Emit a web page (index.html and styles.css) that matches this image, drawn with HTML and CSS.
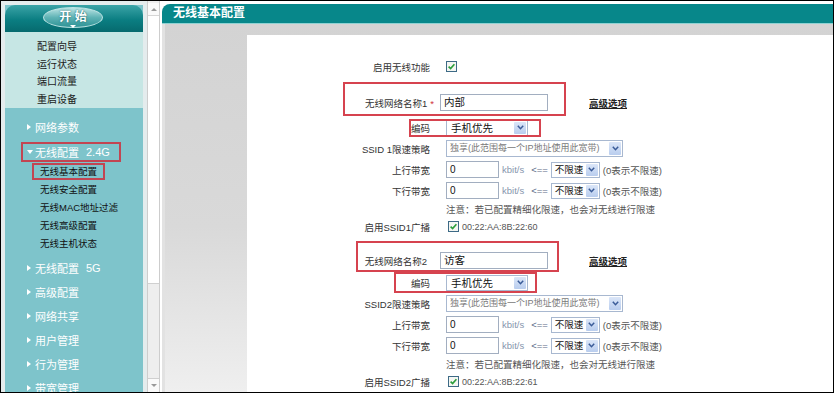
FILE: index.html
```html
<!DOCTYPE html>
<html lang="zh-CN">
<head>
    <meta charset="UTF-8">
    <title>无线基本配置</title>
    <link rel="stylesheet" href="styles.css">
</head>
<body>
<div class="frame">
    <div class="side-wrap">
        <div class="side">
            <div class="side-head">
                <div class="start-btn">开 始<span class="start-arrow"></span></div>
            </div>
            <div class="quick">
                <a>配置向导</a>
                <a>运行状态</a>
                <a>端口流量</a>
                <a>重启设备</a>
            </div>
            <div class="menu">
                <div class="menu-item">网络参数</div>
                <div class="menu-item open">无线配置<span class="band">2.4G</span></div>
                <div class="sub">
                    <div class="sub-item"><span class="cur">无线基本配置</span></div>
                    <div class="sub-item"><span>无线安全配置</span></div>
                    <div class="sub-item"><span>无线MAC地址过滤</span></div>
                    <div class="sub-item"><span>无线高级配置</span></div>
                    <div class="sub-item"><span>无线主机状态</span></div>
                </div>
                <div class="menu-item">无线配置<span class="band">5G</span></div>
                <div class="menu-item">高级配置</div>
                <div class="menu-item">网络共享</div>
                <div class="menu-item">用户管理</div>
                <div class="menu-item">行为管理</div>
                <div class="menu-item">带宽管理</div>
            </div>
        </div>
    </div>

    <div class="vscroll">
        <div class="sb-up"><span class="tri-up"></span></div>
        <div class="sb-thumb"></div>
        <div class="sb-track"></div>
        <div class="sb-down"><span class="tri-down"></span></div>
    </div>

    <div class="main">
        <div class="main-head">无线基本配置</div>
        <div class="main-body">
            <div class="panel">
                <div class="row">
                    <div class="lbl">启用无线功能</div>
                    <div class="val">
                        <svg class="chk" width="11" height="11" viewBox="0 0 11 11"><rect x="0.5" y="0.5" width="10" height="10" fill="#f4f6f2" stroke="#3d6a86"/><path d="M2.6 5.6 L4.6 7.6 L8.4 3.2" fill="none" stroke="#2a9d3a" stroke-width="1.6"/></svg>
                    </div>
                </div>

                <!-- SSID 1 -->
                <div class="row name first">
                    <div class="lbl">无线网络名称1<span class="req">*</span></div>
                    <div class="val">
                        <span class="inp w-name">内部</span>
                        <a class="adv">高级选项</a>
                    </div>
                </div>
                <div class="row enc first">
                    <div class="lbl">编码</div>
                    <div class="val">
                        <span class="sel w-enc"><span class="sel-text">手机优先</span><span class="sel-btn"><svg width="7" height="5" viewBox="0 0 7 5"><path d="M0.8 0.8 L3.5 3.7 L6.2 0.8" fill="none" stroke="#3a5b98" stroke-width="1.5"/></svg></span></span>
                    </div>
                </div>
                <div class="row">
                    <div class="lbl">SSID 1限速策略</div>
                    <div class="val">
                        <span class="sel w-long"><span class="sel-text dim">独享(此范围每一个IP地址使用此宽带)</span><span class="sel-btn"><svg width="7" height="5" viewBox="0 0 7 5"><path d="M0.8 0.8 L3.5 3.7 L6.2 0.8" fill="none" stroke="#3a5b98" stroke-width="1.5"/></svg></span></span>
                    </div>
                </div>
                <div class="row">
                    <div class="lbl">上行带宽</div>
                    <div class="val">
                        <span class="inp w-bw">0</span>
                        <span class="unit">kbit/s</span>
                        <span class="arrow">&lt;==</span>
                        <span class="sel w-lim"><span class="sel-text">不限速</span><span class="sel-btn"><svg width="7" height="5" viewBox="0 0 7 5"><path d="M0.8 0.8 L3.5 3.7 L6.2 0.8" fill="none" stroke="#3a5b98" stroke-width="1.5"/></svg></span></span>
                        <span class="hint">(0表示不限速)</span>
                    </div>
                </div>
                <div class="row">
                    <div class="lbl">下行带宽</div>
                    <div class="val">
                        <span class="inp w-bw">0</span>
                        <span class="unit">kbit/s</span>
                        <span class="arrow">&lt;==</span>
                        <span class="sel w-lim"><span class="sel-text">不限速</span><span class="sel-btn"><svg width="7" height="5" viewBox="0 0 7 5"><path d="M0.8 0.8 L3.5 3.7 L6.2 0.8" fill="none" stroke="#3a5b98" stroke-width="1.5"/></svg></span></span>
                        <span class="hint">(0表示不限速)</span>
                    </div>
                </div>
                <div class="row note">
                    <div class="lbl"></div>
                    <div class="val">注意：若已配置精细化限速，也会对无线进行限速</div>
                </div>
                <div class="row">
                    <div class="lbl">启用SSID1广播</div>
                    <div class="val">
                        <svg class="chk mac-chk" width="11" height="11" viewBox="0 0 11 11"><rect x="0.5" y="0.5" width="10" height="10" fill="#f4f6f2" stroke="#3d6a86"/><path d="M2.6 5.6 L4.6 7.6 L8.4 3.2" fill="none" stroke="#2a9d3a" stroke-width="1.6"/></svg>
                        <span class="mac">00:22:AA:8B:22:60</span>
                    </div>
                </div>

                <!-- SSID 2 -->
                <div class="row name second">
                    <div class="lbl">无线网络名称2</div>
                    <div class="val">
                        <span class="inp w-name">访客</span>
                        <a class="adv">高级选项</a>
                    </div>
                </div>
                <div class="row enc second">
                    <div class="lbl">编码</div>
                    <div class="val">
                        <span class="sel w-enc"><span class="sel-text">手机优先</span><span class="sel-btn"><svg width="7" height="5" viewBox="0 0 7 5"><path d="M0.8 0.8 L3.5 3.7 L6.2 0.8" fill="none" stroke="#3a5b98" stroke-width="1.5"/></svg></span></span>
                    </div>
                </div>
                <div class="row">
                    <div class="lbl">SSID2限速策略</div>
                    <div class="val">
                        <span class="sel w-long"><span class="sel-text dim">独享(此范围每一个IP地址使用此宽带)</span><span class="sel-btn"><svg width="7" height="5" viewBox="0 0 7 5"><path d="M0.8 0.8 L3.5 3.7 L6.2 0.8" fill="none" stroke="#3a5b98" stroke-width="1.5"/></svg></span></span>
                    </div>
                </div>
                <div class="row">
                    <div class="lbl">上行带宽</div>
                    <div class="val">
                        <span class="inp w-bw">0</span>
                        <span class="unit">kbit/s</span>
                        <span class="arrow">&lt;==</span>
                        <span class="sel w-lim"><span class="sel-text">不限速</span><span class="sel-btn"><svg width="7" height="5" viewBox="0 0 7 5"><path d="M0.8 0.8 L3.5 3.7 L6.2 0.8" fill="none" stroke="#3a5b98" stroke-width="1.5"/></svg></span></span>
                        <span class="hint">(0表示不限速)</span>
                    </div>
                </div>
                <div class="row">
                    <div class="lbl">下行带宽</div>
                    <div class="val">
                        <span class="inp w-bw">0</span>
                        <span class="unit">kbit/s</span>
                        <span class="arrow">&lt;==</span>
                        <span class="sel w-lim"><span class="sel-text">不限速</span><span class="sel-btn"><svg width="7" height="5" viewBox="0 0 7 5"><path d="M0.8 0.8 L3.5 3.7 L6.2 0.8" fill="none" stroke="#3a5b98" stroke-width="1.5"/></svg></span></span>
                        <span class="hint">(0表示不限速)</span>
                    </div>
                </div>
                <div class="row note">
                    <div class="lbl"></div>
                    <div class="val">注意：若已配置精细化限速，也会对无线进行限速</div>
                </div>
                <div class="row">
                    <div class="lbl">启用SSID2广播</div>
                    <div class="val">
                        <svg class="chk mac-chk" width="11" height="11" viewBox="0 0 11 11"><rect x="0.5" y="0.5" width="10" height="10" fill="#f4f6f2" stroke="#3d6a86"/><path d="M2.6 5.6 L4.6 7.6 L8.4 3.2" fill="none" stroke="#2a9d3a" stroke-width="1.6"/></svg>
                        <span class="mac">00:22:AA:8B:22:61</span>
                    </div>
                </div>

                <!-- red highlight marks drawn over the form -->
                <div class="mark mark-name1"></div>
                <div class="mark mark-enc1"></div>
                <div class="mark mark-name2"></div>
                <div class="mark mark-enc2"></div>
            </div>
        </div>
    </div>
</div>
</body>
</html>
```

FILE: styles.css
```css
body {
    margin: 0;
    background: #fff;
    font-family: "Liberation Sans", "Noto Sans CJK SC", sans-serif;
    color: #333;
}
.frame {
    width: 834px;
    height: 393px;
    box-sizing: border-box;
    border: 1px solid #000;
    display: flex;
    overflow: hidden;
}

/* left menu */
.side-wrap {
    width: 146px;
    flex: none;
    padding: 4px 4px 0 4px;
    box-sizing: border-box;
    background: #e4eced;
}
.side {
    width: 138px;
    height: 100%;
    background: #7ec4cb;
}
.side-head {
    height: 27px;
    border-radius: 10px 10px 0 0;
    background: linear-gradient(#3ba4a7, #0b7e82 55%, #066a6e);
    display: flex;
    justify-content: center;
    align-items: center;
}
.start-btn {
    position: relative;
    width: 58px;
    height: 19px;
    margin: 0 2px 2px 0;
    border-radius: 50%;
    border: 1px solid #bde4e4;
    background: linear-gradient(#b9e3e3, #5fb3b5 50%, #2e9396);
    color: #fff;
    font-weight: bold;
    font-size: 12px;
    line-height: 19px;
    text-align: center;
    text-shadow: 0 0 2px #0a5a5d;
}
.start-arrow {
    position: absolute;
    left: 50%;
    bottom: -1px;
    margin-left: -3px;
    border-left: 3px solid transparent;
    border-right: 3px solid transparent;
    border-top: 3px solid #fff;
}
.quick {
    height: 76px;
    padding-top: 6px;
    box-sizing: border-box;
    background: #c6e6e4;
}
.quick a {
    display: block;
    padding-left: 32px;
    line-height: 17.7px;
    font-size: 10px;
    color: #1b1b1b;
}
.menu {
    padding-top: 7px;
}
.menu-item {
    display: flex;
    align-items: center;
    height: 24px;
    padding-left: 22px;
    color: #fff;
    font-size: 11px;
}
.menu-item::before {
    content: "";
    border-left: 4px solid #fff;
    border-top: 3px solid transparent;
    border-bottom: 3px solid transparent;
    margin-right: 4px;
}
.menu-item.open {
    box-sizing: border-box;
    width: 100px;
    height: 20px;
    margin: 3px 0 1px 16px;
    padding-left: 4px;
    border: 2px solid #c24552;
}
.menu-item.open::before {
    border-top: 4px solid #fff;
    border-left: 3px solid transparent;
    border-right: 3px solid transparent;
    border-bottom: 0;
    margin-right: 2px;
}
.band {
    margin-left: 7px;
}
.sub {
    padding-bottom: 4px;
}
.sub-item {
    height: 17.8px;
    display: flex;
    align-items: center;
    padding-left: 27px;
}
.sub-item span {
    padding: 0 6px;
    border: 2px solid transparent;
    line-height: 13px;
    font-size: 9.5px;
    color: #111;
}
.sub-item .cur {
    border-color: #c24552;
}

/* menu scrollbar */
.vscroll {
    width: 13px;
    flex: none;
    margin-right: 2px;
    box-sizing: border-box;
    border-left: 1px solid #cdcdcd;
    border-right: 1px solid #cdcdcd;
    display: flex;
    flex-direction: column;
    background: #eeeeee;
}
.sb-up, .sb-down {
    height: 12px;
    background: #fafafa;
    display: flex;
    justify-content: center;
    align-items: center;
}
.sb-up {
    border-bottom: 1px solid #d6d6d6;
    margin-top: 2px;
}
.sb-down {
    height: 13px;
    border-top: 1px solid #cfcfcf;
}
.tri-up {
    border-left: 3px solid transparent;
    border-right: 3px solid transparent;
    border-bottom: 3px solid #9a9a9a;
}
.tri-down {
    border-left: 3px solid transparent;
    border-right: 3px solid transparent;
    border-top: 3px solid #9a9a9a;
}
.sb-thumb {
    height: 267px;
    background: #fff;
    border-bottom: 1px solid #d0d0d0;
}
.sb-track {
    flex: 1;
}

/* content */
.main {
    flex: 1;
    display: flex;
    flex-direction: column;
    padding-top: 3px;
    background: #fff;
}
.main-head {
    height: 19px;
    line-height: 19px;
    background: #07878a;
    border-radius: 8px 0 0 0;
    border-bottom: 1px solid #8fd2d2;
    color: #fff;
    font-weight: bold;
    font-size: 12px;
    padding-left: 11px;
}
.main-body {
    flex: 1;
    display: flex;
    padding: 11px 0 0 85px;
    background: linear-gradient(#d3d3d3, #d9d9d9 55%, #efefef);
    box-shadow: inset 3px 0 0 #e2e2e2;
}
.panel {
    flex: 1;
    position: relative;
    background: #fff;
    padding-top: 21px;
}

.row {
    display: grid;
    grid-template-columns: 183px 1fr;
    column-gap: 16px;
    height: 21px;
    align-items: center;
    font-size: 9.5px;
    color: #333;
}
.lbl {
    text-align: right;
    white-space: nowrap;
}
.val {
    display: flex;
    align-items: center;
    white-space: nowrap;
}
.row.name {
    grid-template-columns: 188px 1fr;
    column-gap: 5px;
}
.row.name .lbl {
    padding-right: 8px;
}
.row.name.first {
    margin-top: 15px;
}
.row.name.first .lbl {
    padding-right: 1px;
}
.row.enc.first {
    margin-top: 4px;
}
.row.name.second {
    margin-top: 13px;
}
.row.enc.second {
    margin-top: 1px;
}
.row.note {
    height: 15px;
    color: #555;
}
.req {
    color: #d0333b;
    margin-left: 3px;
}

.chk {
    flex: none;
}
.mac-chk {
    margin-left: 2px;
}
.mac {
    margin-left: 3px;
    color: #555;
    font-size: 9px;
}
.inp {
    box-sizing: border-box;
    height: 17px;
    line-height: 15px;
    border: 1px solid #a2aec0;
    padding-left: 3px;
    font-size: 10.5px;
    color: #111;
    background: #fff;
}
.w-name { width: 108px; }
.w-bw { width: 53px; font-size: 10px; }
.adv {
    margin-left: 41px;
    font-weight: bold;
    text-decoration: underline;
    color: #222;
    font-size: 9.5px;
}
.sel {
    box-sizing: border-box;
    display: inline-flex;
    align-items: stretch;
    height: 16px;
    border: 1px solid #a8b8d0;
    background: #fff;
}
.sel-text {
    flex: 1;
    padding-left: 4px;
    line-height: 14px;
    font-size: 10.5px;
    color: #111;
    overflow: hidden;
}
.sel-text.dim {
    font-size: 9px;
    color: #7a7a7a;
    padding-left: 3px;
}
.sel-btn {
    width: 12px;
    flex: none;
    margin: 1px;
    background: linear-gradient(#dbe6f8, #b9cdee);
    border-radius: 1px;
    display: flex;
    justify-content: center;
    align-items: center;
}
.w-enc { width: 82px; }
.w-long { width: 177px; height: 17px; }
.w-lim { width: 49px; margin-left: 3px; }
.w-lim .sel-text {
    font-size: 9.5px;
    padding-left: 3px;
}
.unit {
    margin-left: 3px;
    color: #8796ad;
    font-size: 9.5px;
}
.arrow {
    margin-left: 7px;
    color: #5c6a86;
    font-size: 9.5px;
}
.hint {
    margin-left: 3px;
    color: #555;
}

/* red highlight boxes over the form */
.mark {
    position: absolute;
    box-sizing: border-box;
    border: 2px solid #d6434f;
}
.mark-name1 { left: 96px; top: 47px; width: 223px; height: 34px; }
.mark-enc1 { left: 162px; top: 84px; width: 132px; height: 18px; }
.mark-name2 { left: 109px; top: 206px; width: 203px; height: 31px; }
.mark-enc2 { left: 147px; top: 237px; width: 143px; height: 21px; }
```
